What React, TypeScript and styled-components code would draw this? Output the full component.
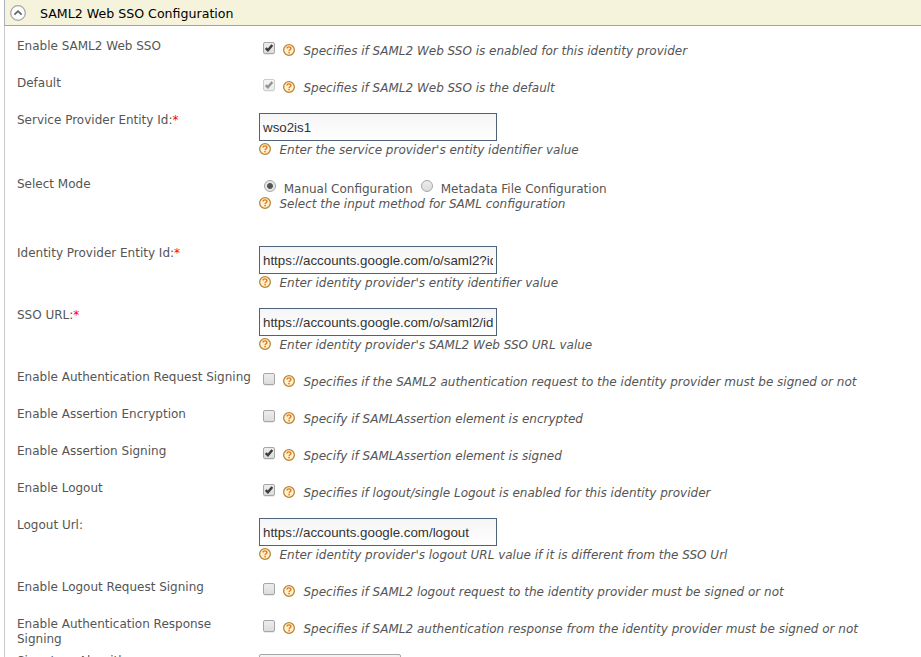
import React from "react";
import styled, { createGlobalStyle, css } from "styled-components";

const GlobalStyle = createGlobalStyle`
  html, body { margin: 0; padding: 0; background: #fff; }
  body {
    height: 657px;
    overflow: hidden;
    font-family: "DejaVu Sans", Verdana, sans-serif;
    font-size: 12px;
    line-height: 15px;
    color: #555;
  }
`;

const Section = styled.section`
  width: 917px;
  height: 657px;
  margin-left: 4px;
  overflow: hidden;
`;

const SectionHeader = styled.header`
  box-sizing: border-box;
  display: flex;
  align-items: center;
  height: 26px;
  padding-left: 5px;
  background: #f5f3dc;
  border-left: 1px solid #a9b4bf;
  border-bottom: 1px solid #94a6b9;
  color: #000;
`;

const SectionTitle = styled.h2`
  margin: 1px 0 0 14px;
  font-size: 12.6px;
  font-weight: normal;
  line-height: 15px;
`;

const Form = styled.div`
  box-sizing: border-box;
  height: 631px;
  padding: 12px 0 0 12px;
  border-left: 1px solid #ccc;
`;

const Row = styled.div<{ $height: number }>`
  display: grid;
  grid-template-columns: 242px 1fr;
  height: ${(p) => p.$height}px;
`;

const Label = styled.label`
  padding: 1px 6px 0 0;
`;

const Required = styled.span`
  color: #f00;
`;

const Inline = styled.div`
  display: flex;
  align-items: flex-start;
  padding: 4px 0 0 4px;
`;

const Hint = styled.span`
  margin: 2px 0 0 8.5px;
  font-style: italic;
  white-space: nowrap;
`;

const HintLine = styled.div`
  display: flex;
  height: 15px;

  svg { margin-top: 1px; }
  ${Hint} { margin-top: 1px; }
`;

const HelpSvg = styled.svg`
  display: block;
  flex: none;
  width: 12px;
  height: 12px;
`;

const InlineHelp = styled.span`
  margin: 2px 0 0 8px;
`;

const control = css`
  box-sizing: border-box;
  display: block;
  flex: none;
  width: 12px;
  height: 12px;
  border: 1px solid #a6a6a6;
  background: linear-gradient(#ededed, #dcdcdc);
`;

const CheckFrame = styled.span<{ $disabled?: boolean }>`
  ${control}
  border-radius: 2px;
  box-shadow: 0 1px 0 rgba(0, 0, 0, 0.08);
  opacity: ${(p) => (p.$disabled ? 0.55 : 1)};

  svg { display: block; width: 10px; height: 10px; overflow: visible; }
`;

const RadioFrame = styled.span<{ $checked?: boolean }>`
  ${control}
  border-radius: 50%;
  ${(p) =>
    p.$checked &&
    css`
      background: radial-gradient(circle at center, #555 0 2.5px, #e6e6e6 3.4px);
    `}
`;

const RadioLine = styled.div`
  display: flex;
  align-items: flex-start;
  height: 20px;
  padding: 4px 0 0 5px;
  box-sizing: border-box;
`;

const RadioText = styled.span`
  margin: 2px 8.5px 0 7.7px;
  white-space: nowrap;
`;

const FieldStack = styled.div`
  padding-top: 1px;
`;

const TextInput = styled.input`
  box-sizing: border-box;
  display: block;
  width: 238px;
  height: 28px;
  margin: 0 0 1px;
  padding: 1px 3px 0;
  border: 1px solid #4c637b;
  border-radius: 0;
  outline: none;
  background: linear-gradient(#f5f5f5, #fff);
  color: #333;
  font: 13.333px "Liberation Sans", Arial, sans-serif;
`;

const SelectBox = styled.div`
  box-sizing: border-box;
  width: 142px;
  height: 22px;
  margin-top: 1px;
  border: 1px solid #a6a6a6;
  border-radius: 2px;
  background: linear-gradient(#f4f4f4, #e2e2e2);
`;

const HelpIcon = () => (
  <HelpSvg viewBox="0 0 12 12" aria-hidden="true">
    <circle cx="6" cy="6" r="5.35" fill="#fff4cf" stroke="#b7853a" strokeWidth="1.3" />
    <path d="M4.1 4.6C4.1 3.4 4.9 2.9 6 2.9s1.9.6 1.9 1.6c0 1.2-1.8 1.3-1.8 2.7" fill="none" stroke="#e8731c" strokeWidth="1.4" />
    <rect x="5.3" y="8" width="1.5" height="1.4" fill="#e8731c" />
  </HelpSvg>
);

const CollapseIcon = () => (
  <svg width="16" height="16" viewBox="0 0 16 16" aria-hidden="true">
    <circle cx="8" cy="8" r="7.3" fill="#fdfdfd" stroke="#a5a5a5" strokeWidth="1.2" />
    <path d="M4.4 9.7 8 6.2l3.6 3.5" fill="none" stroke="#666" strokeWidth="1.8" />
  </svg>
);

const Checkbox = ({ checked, disabled }: { checked?: boolean; disabled?: boolean }) => (
  <CheckFrame $disabled={disabled} role="checkbox" aria-checked={!!checked} aria-disabled={!!disabled}>
    {checked && (
      <svg viewBox="0 0 10 10">
        <path d="M1.7 5.2 3.9 7.3 8.3 2" fill="none" stroke="#3c3c3c" strokeWidth="2.4" />
      </svg>
    )}
  </CheckFrame>
);

interface CheckRowProps {
  label: string;
  hint: string;
  checked?: boolean;
  disabled?: boolean;
}

const CheckRow = ({ label, hint, checked, disabled }: CheckRowProps) => (
  <Row $height={37}>
    <Label>{label}</Label>
    <Inline>
      <Checkbox checked={checked} disabled={disabled} />
      <InlineHelp><HelpIcon /></InlineHelp>
      <Hint>{hint}</Hint>
    </Inline>
  </Row>
);

interface TextRowProps {
  label: string;
  value: string;
  hint: string;
  required?: boolean;
  height?: number;
}

const TextRow = ({ label, value, hint, required, height = 62 }: TextRowProps) => (
  <Row $height={height}>
    <Label>{label}{required && <Required>*</Required>}</Label>
    <FieldStack>
      <TextInput defaultValue={value} aria-label={label} />
      <HintLine><HelpIcon /><Hint>{hint}</Hint></HintLine>
    </FieldStack>
  </Row>
);

export default function App() {
  return (
    <>
      <GlobalStyle />
      <Section>
        <SectionHeader>
          <CollapseIcon />
          <SectionTitle>SAML2 Web SSO Configuration</SectionTitle>
        </SectionHeader>
        <Form>
          <CheckRow label="Enable SAML2 Web SSO" hint="Specifies if SAML2 Web SSO is enabled for this identity provider" checked />
          <CheckRow label="Default" hint="Specifies if SAML2 Web SSO is the default" checked disabled />
          <TextRow label="Service Provider Entity Id:" required height={64} value="wso2is1" hint="Enter the service provider's entity identifier value" />
          <Row $height={69}>
            <Label>Select Mode</Label>
            <div>
              <RadioLine>
                <RadioFrame $checked role="radio" aria-checked />
                <RadioText>Manual Configuration</RadioText>
                <RadioFrame role="radio" aria-checked={false} />
                <RadioText>Metadata File Configuration</RadioText>
              </RadioLine>
              <HintLine><HelpIcon /><Hint>Select the input method for SAML configuration</Hint></HintLine>
            </div>
          </Row>
          <TextRow label="Identity Provider Entity Id:" required value="https://accounts.google.com/o/saml2?idpid=C01" hint="Enter identity provider's entity identifier value" />
          <TextRow label="SSO URL:" required value="https://accounts.google.com/o/saml2/idp?idpid=C01" hint="Enter identity provider's SAML2 Web SSO URL value" />
          <CheckRow label="Enable Authentication Request Signing" hint="Specifies if the SAML2 authentication request to the identity provider must be signed or not" />
          <CheckRow label="Enable Assertion Encryption" hint="Specify if SAMLAssertion element is encrypted" />
          <CheckRow label="Enable Assertion Signing" hint="Specify if SAMLAssertion element is signed" checked />
          <CheckRow label="Enable Logout" hint="Specifies if logout/single Logout is enabled for this identity provider" checked />
          <TextRow label="Logout Url:" value="https://accounts.google.com/logout" hint="Enter identity provider's logout URL value if it is different from the SSO Url" />
          <CheckRow label="Enable Logout Request Signing" hint="Specifies if SAML2 logout request to the identity provider must be signed or not" />
          <CheckRow label="Enable Authentication Response Signing" hint="Specifies if SAML2 authentication response from the identity provider must be signed or not" />
          <Row $height={37}>
            <Label>Signature Algorithm</Label>
            <SelectBox />
          </Row>
        </Form>
      </Section>
    </>
  );
}
